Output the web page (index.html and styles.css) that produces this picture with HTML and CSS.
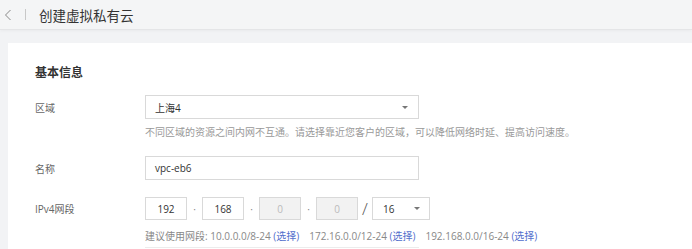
FILE: index.html
```html
<!DOCTYPE html>
<html lang="zh-CN">
<head>
<meta charset="utf-8">
<title>创建虚拟私有云</title>
<link rel="stylesheet" href="styles.css">
</head>
<body>
<header class="header">
  <svg class="back" width="8" height="12" viewBox="0 0 8 12"><path d="M6.5 1 L1.5 6 L6.5 11" fill="none" stroke="#888" stroke-width="1"/></svg>
  <span class="sep"></span>
  <h1 class="title">创建虚拟私有云</h1>
</header>
<main class="main">
  <section class="card">
    <h2 class="section-title">基本信息</h2>
    <div class="row">
      <div class="label">区域</div>
      <div class="field">
        <div class="select wide"><span>上海4</span><span class="caret"></span></div>
      </div>
    </div>
    <div class="hint">不同区域的资源之间内网不互通。请选择靠近您客户的区域，可以降低网络时延、提高访问速度。</div>
    <div class="row row-name">
      <div class="label">名称</div>
      <div class="field"><div class="input wide">vpc-eb6</div></div>
    </div>
    <div class="row row-ip">
      <div class="label">IPv4网段</div>
      <div class="field ip">
        <div class="input oct">192</div><span class="dot">·</span>
        <div class="input oct">168</div><span class="dot">·</span>
        <div class="input oct disabled">0</div><span class="dot">·</span>
        <div class="input oct disabled">0</div><span class="slash">/</span>
        <div class="select mask"><span>16</span><span class="caret"></span></div>
      </div>
    </div>
    <div class="suggest">建议使用网段: 10.0.0.0/8-24 <a class="link">(选择)</a><span class="gap"></span>172.16.0.0/12-24 <a class="link">(选择)</a><span class="gap"></span>192.168.0.0/16-24 <a class="link">(选择)</a></div>
    <div class="next"></div>
  </section>
</main>
</body>
</html>
```
FILE: styles.css
```css
* { box-sizing: border-box; }
html, body { margin: 0; padding: 0; }
body {
  background: #f2f3f5;
  font-family: "Open Sans", "Noto Sans CJK SC", sans-serif;
  font-size: 10px;
  color: #333;
  height: 249px;
  overflow: hidden;
}
.header {
  height: 30px;
  background: #f4f5f6;
  border-bottom: 1px solid #e4e5e7;
  box-shadow: 0 1px 3px rgba(0,0,0,0.04);
  display: flex;
  align-items: center;
  padding-left: 4px;
}
.back { display: block; }
.sep {
  width: 1px;
  height: 11px;
  background: #c8c8c8;
  margin-left: 13px;
}
.title {
  margin: 0 0 0 13px;
  font-size: 13.5px;
  font-weight: normal;
  color: #333;
  font-family: "Noto Sans CJK SC", sans-serif;
}
.main { padding: 13px 0 0 8px; }
.card {
  background: #fff;
  padding: 21px 0 0 27px;
  height: 206px;
  overflow: hidden;
}
.section-title {
  margin: 0;
  font-size: 12px;
  line-height: 16px;
  font-weight: bold;
  color: #333;
  font-family: "Noto Sans CJK SC", sans-serif;
}
.row {
  display: flex;
  align-items: center;
  margin-top: 15px;
}
.row-name { margin-top: 17px; }
.row-ip { margin-top: 17px; }
.label {
  width: 110px;
  color: #666;
  font-size: 10px;
}
.field { display: flex; align-items: center; }
.select, .input {
  height: 24px;
  border: 1px solid #d9d9d9;
  background: #fff;
  display: flex;
  align-items: center;
  color: #333;
}
.wide { width: 274px; padding-left: 9px; }
.select { justify-content: space-between; padding-right: 10px; }
.caret {
  width: 0; height: 0;
  border-left: 3px solid transparent;
  border-right: 3px solid transparent;
  border-top: 3px solid #777;
}
.hint {
  margin: 6px 0 0 110px;
  line-height: 14px;
  color: #999;
  font-size: 10px;
}
.ip .input, .ip .select { height: 23px; }
.oct { width: 42px; justify-content: center; }
.disabled { background: #f2f2f2; color: #bbb; }
.dot {
  width: 15px;
  text-align: center;
  color: #888;
  font-size: 10px;
}
.slash {
  width: 14px;
  text-align: center;
  color: #555;
  font-size: 17px;
  font-weight: 300;
}
.mask { width: 58px; padding-left: 10px; padding-right: 9px; }
.suggest {
  margin: 9px 0 0 110px;
  line-height: 14px;
  color: #888;
  font-size: 10px;
}
.link { color: #526ecc; }
.gap { display: inline-block; width: 10px; }
.next {
  margin: 4px 0 0 110px;
  height: 2px;
  border-top: 1px solid #ececec;
  width: 274px;
}
```
